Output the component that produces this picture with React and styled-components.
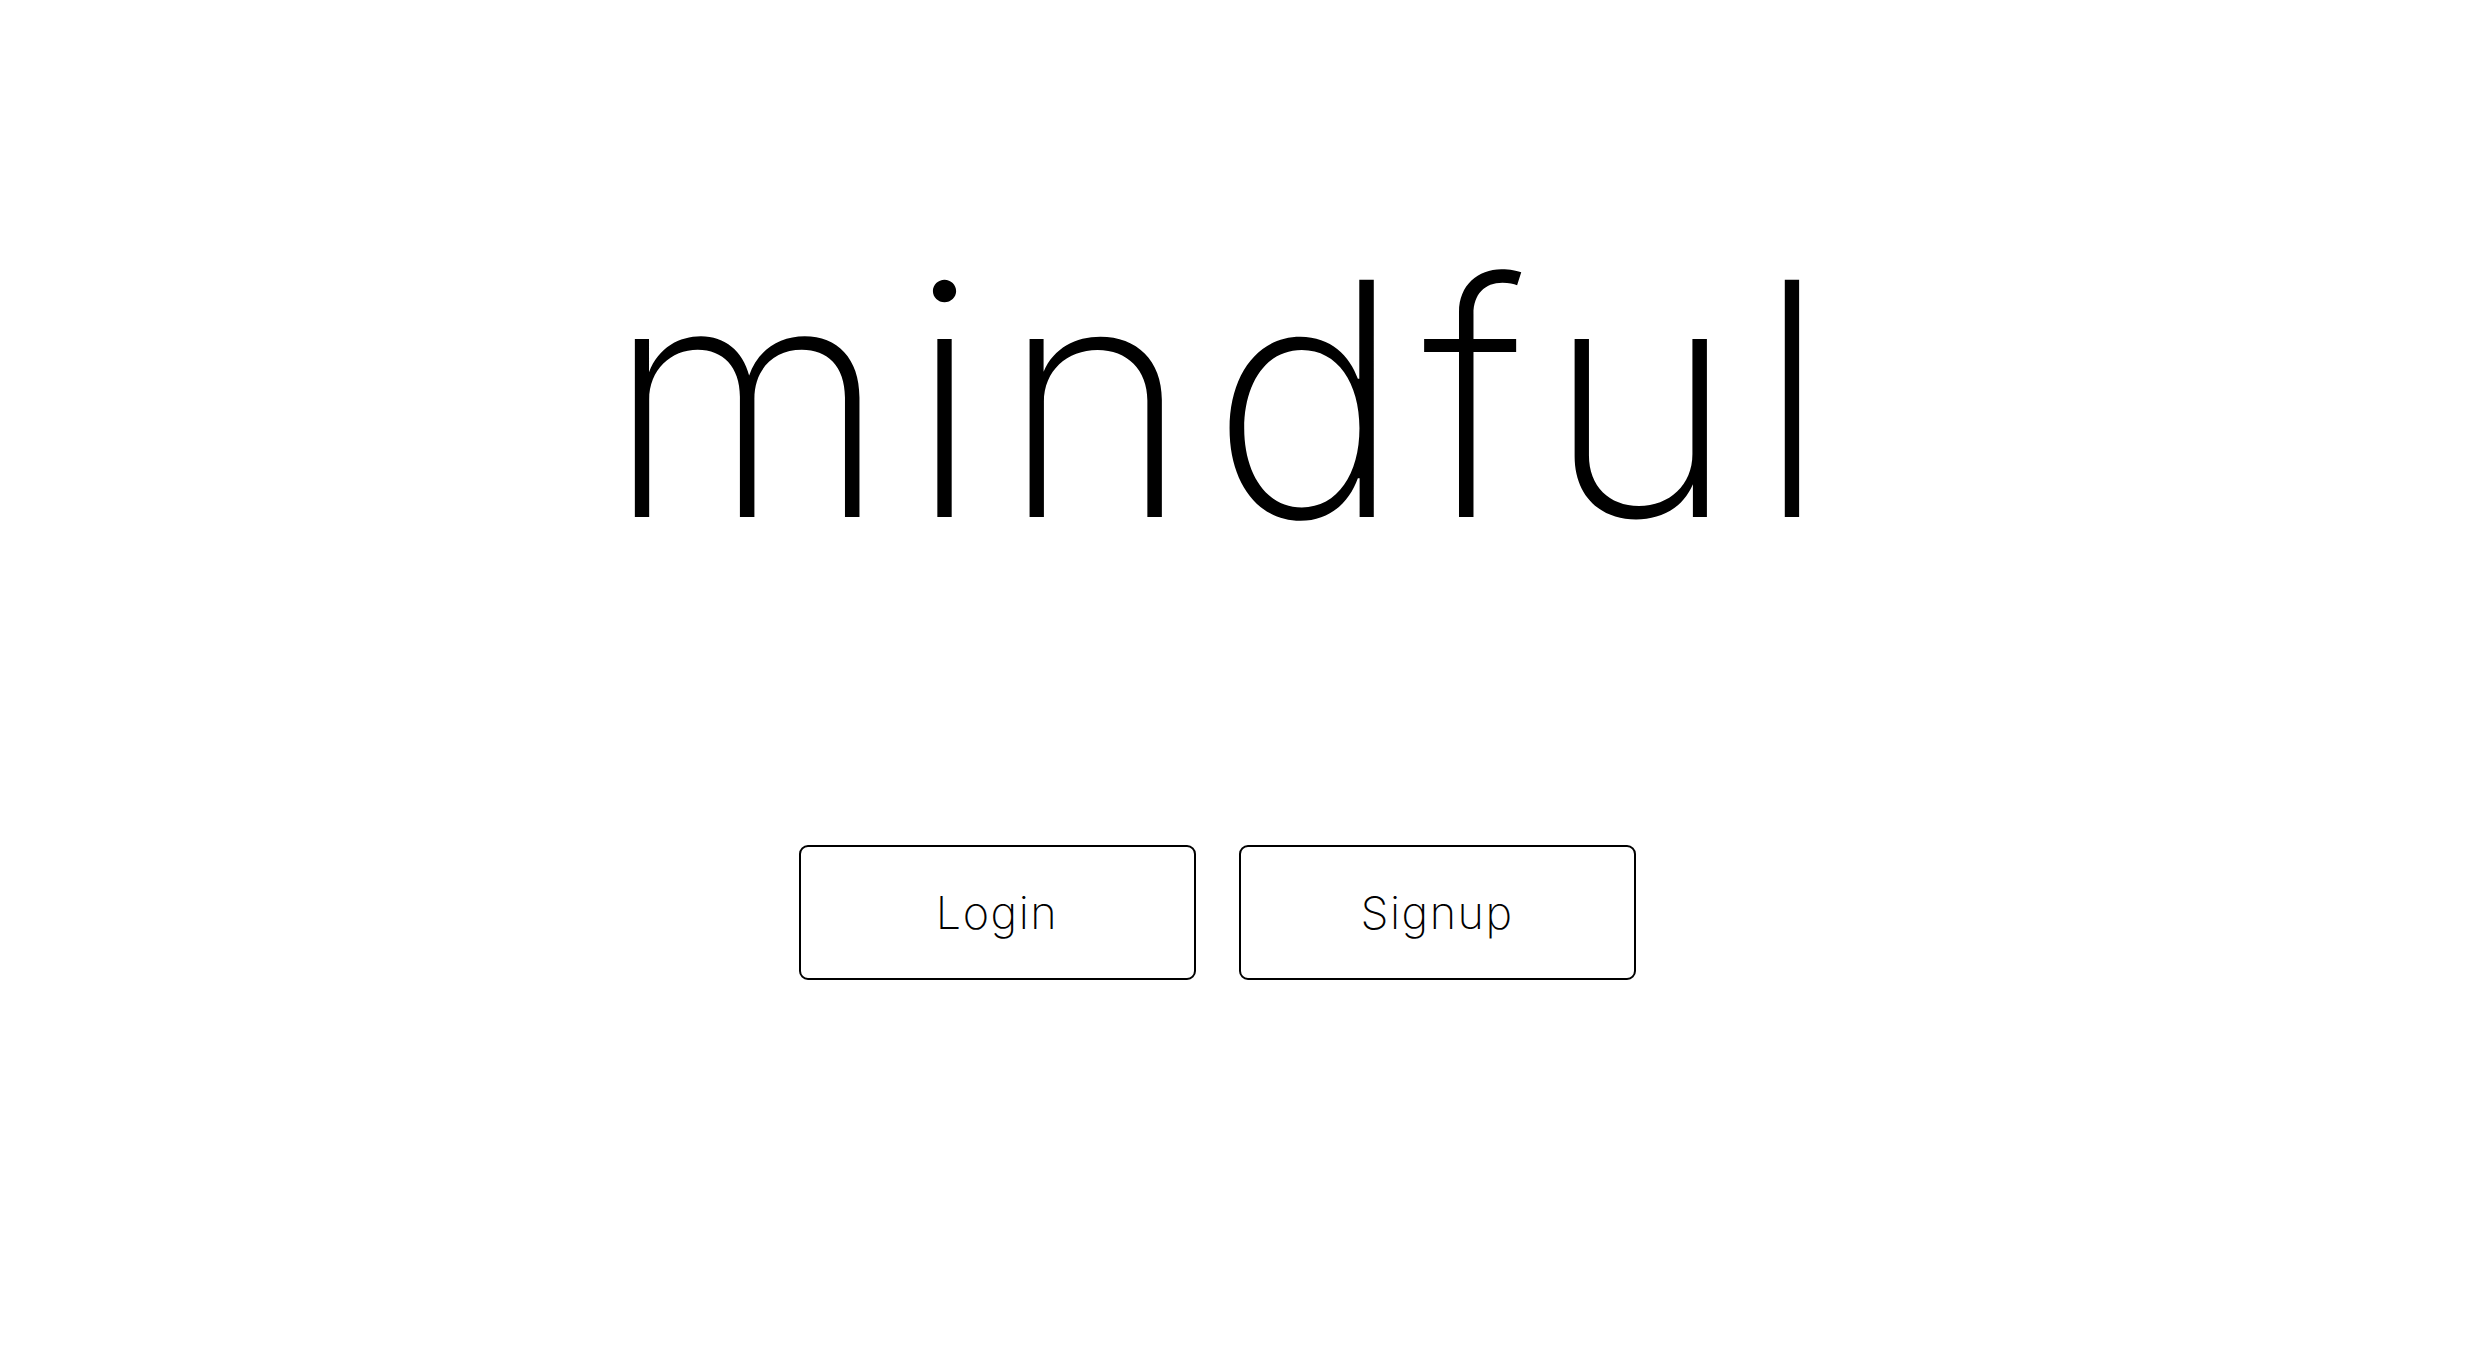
import React from 'react';
import styled, { createGlobalStyle } from 'styled-components';

const GlobalStyle = createGlobalStyle`
  html, body {
    margin: 0;
    padding: 0;
    background: #ffffff;
    font-family: Inter, "Noto Sans", sans-serif;
    color: #000000;
  }
`;

const Page = styled.main`
  width: calc(100% - 48px);
  min-height: 100vh;
  display: flex;
  flex-direction: column;
  align-items: center;
  padding-top: 236px;
  box-sizing: border-box;
`;

const Title = styled.h1`
  margin: 0;
  padding-left: 19px;
  font-family: Inter, "Noto Sans", sans-serif;
  font-weight: 220;
  font-size: 326px;
  line-height: 1;
  letter-spacing: 19px;
  color: #000;
`;

const Actions = styled.div`
  display: flex;
  gap: 43px;
  margin-top: 283px;
`;

const ActionButton = styled.button`
  width: 397px;
  height: 135px;
  background: #fff;
  border: 2px solid #000;
  border-radius: 9px;
  font-family: Inter, "Noto Sans", sans-serif;
  font-weight: 200;
  font-size: 45px;
  letter-spacing: 1.5px;
  color: #000;
  cursor: pointer;
`;

export default function App() {
  return (
    <>
      <GlobalStyle />
      <Page>
        <Title>mindful</Title>
        <Actions>
          <ActionButton>Login</ActionButton>
          <ActionButton>Signup</ActionButton>
        </Actions>
      </Page>
    </>
  );
}
